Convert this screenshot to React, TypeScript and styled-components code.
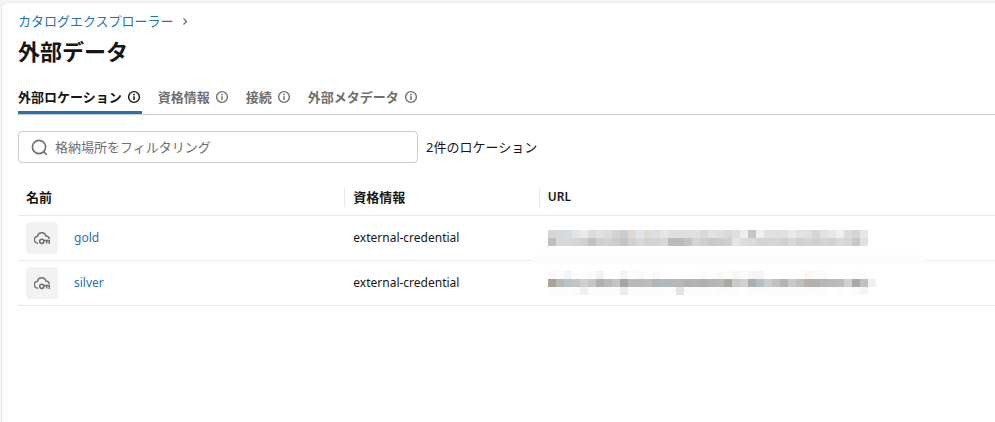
import React from "react";
import styled, { createGlobalStyle } from "styled-components";

const GlobalStyle = createGlobalStyle`
  *, *::before, *::after { box-sizing: border-box; }
  html, body, #root { height: 100%; }
  body {
    margin: 0;
    background: #f5f5f6;
    color: #161616;
    font-family: "Noto Sans", "Noto Sans CJK JP", sans-serif;
    font-size: 13px;
    line-height: 20px;
  }
`;

const Shell = styled.div`
  min-height: 100%;
  padding: 2px 0 0 1px;
  display: flex;
`;

const Panel = styled.main`
  flex: 1;
  min-width: 0;
  padding: 8px 0 0 16px;
  background: #fff;
  border: solid #e8e9f1;
  border-width: 1px 0 0 1px;
  border-top-left-radius: 8px;
`;

const Breadcrumb = styled.nav`
  display: flex;
  align-items: center;
  gap: 8px;
`;

const Link = styled.a`
  color: #2272b4;
  text-decoration: none;
  &:hover { text-decoration: underline; }
`;

const Title = styled.h1`
  margin: 6px 0 0;
  font-size: 22px;
  line-height: 28px;
  font-weight: 700;
`;

const Tabs = styled.div`
  display: flex;
  gap: 16px;
  margin-top: 17px;
  border-bottom: 1px solid #cbcbcb;
`;

const Tab = styled.button<{ $active?: boolean }>`
  display: flex;
  align-items: center;
  gap: 5px;
  height: 32px;
  padding: 0 1px 2px 0;
  border: 0;
  background: none;
  box-shadow: ${(p) => (p.$active ? "inset 0 -3px #2272b4" : "none")};
  color: ${(p) => (p.$active ? "#161616" : "#6f6f6f")};
  font: inherit;
  font-weight: 700;
  white-space: nowrap;
  cursor: pointer;
`;

const Toolbar = styled.div`
  display: flex;
  align-items: center;
  gap: 8px;
  margin-top: 16px;
`;

const SearchBox = styled.label`
  display: flex;
  align-items: center;
  gap: 7px;
  flex: 0 1 400px;
  height: 32px;
  padding: 0 12px;
  border: 1px solid #cbcbcb;
  border-radius: 4px;
  color: #6f6f6f;
  &:focus-within { border-color: #2272b4; }
`;

const SearchInput = styled.input`
  flex: 1;
  min-width: 0;
  padding: 0;
  border: 0;
  outline: 0;
  background: none;
  color: #161616;
  font: inherit;
  &::placeholder { color: #6f6f6f; opacity: 1; }
`;

const Table = styled.table`
  width: 100%;
  margin-top: 16px;
  table-layout: fixed;
  border-collapse: separate;
  border-spacing: 0;
  text-align: left;
`;

const HeadCell = styled.th<{ $width?: string }>`
  width: ${(p) => p.$width ?? "auto"};
  height: 37px;
  padding: 0;
  border-bottom: 1px solid #e8eaed;
  font-size: ${(p) => (p.lang === "en" ? 12 : 13)}px;
  font-weight: ${(p) => (p.lang === "en" ? 600 : 700)};
`;

const HeadLabel = styled.div<{ $divided?: boolean }>`
  padding-left: 8px;
  border-left: ${(p) => (p.$divided ? "1px solid #e8e8e8" : "0")};
`;

const Cell = styled.td`
  position: relative;
  height: 45px;
  padding: 0 0 0 9px;
  border-bottom: 1px solid #e6e9ef;
  font-size: 12px;
`;

const NameCell = styled.div`
  display: flex;
  align-items: center;
  gap: 16px;
  margin-left: -1px;
`;

const IconTile = styled.span`
  display: grid;
  place-items: center;
  width: 32px;
  height: 32px;
  border-radius: 4px;
  background: #f2f2f4;
  color: #6f6f6f;
`;

const Mosaic = styled.svg`
  display: block;
`;

const Veil = styled.span`
  position: absolute;
  left: -7px;
  bottom: -3px;
  z-index: 1;
  width: 394px;
  height: 8px;
  background: #fcfcfc;
`;

function InfoIcon() {
  return (
    <svg width="14" height="14" viewBox="0 0 14 14" fill="none" aria-hidden="true">
      <circle cx="7" cy="7" r="5.4" stroke="currentColor" strokeWidth="1.4" />
      <path d="M7 6.3V9.9" stroke="currentColor" strokeWidth="1.5" />
      <circle cx="7" cy="4.6" r="0.9" fill="currentColor" />
    </svg>
  );
}

function ChevronIcon() {
  return (
    <svg width="6" height="8" viewBox="0 0 6 8" fill="none" aria-hidden="true">
      <path d="M1.5 1.5 4.5 4.5 1.5 7.5" stroke="#6f6f6f" strokeWidth="1.3" />
    </svg>
  );
}

function SearchIcon() {
  return (
    <svg width="17" height="17" viewBox="0 0 17 17" fill="none" aria-hidden="true">
      <circle cx="8" cy="8" r="6.6" stroke="currentColor" strokeWidth="1.6" />
      <path d="M12.6 12.6 15.8 15.8" stroke="currentColor" strokeWidth="1.6" />
    </svg>
  );
}

function CloudKeyIcon() {
  return (
    <svg width="16" height="16" viewBox="0 0 16 16" fill="none" stroke="currentColor" strokeWidth="1.5" aria-hidden="true">
      <path d="M4 13.2A3.5 3.5 0 0 1 3.65 6.2 4.2 4.2 0 0 1 11.9 6.1C13.6 6.2 14.9 7.2 15.3 8.8" />
      <circle cx="7.8" cy="11.3" r="2.1" />
      <path d="M9.9 10.6H15.3V14.1M12.7 10.6V13.6" />
    </svg>
  );
}

const goldPixels = [
  "d9d5d3 d8d9d7 d5dce0 e2e4e8 ecebea dbdcdb dfe1e5 dcdbd9 d4d2cf cbcdd1 ded9d4 e1e5ea dedad5 dcdee2 e5e5e6 dfdfdf dfdfde e0e0df e0e0e0 d9dad6 e2e3e4 e1dfdb d9dad6 dce0e3 eeeeed c5c5c5 f0f0f0 e0e0e0 e0e0e0 dfe0e4 ebeae9 e2e4e3 e0e0df d5d6d3 e0e1e3 e9e7e4 eef0f3 dedcda d5d5d6 e3e8ec",
  "c5bfba d8d9d6 d2dadd d4d5d8 d0d0d2 c7c0b9 cdd1d6 cfd2d6 d0ccca c1c5ca d6cfcd d3dade d5d2cb d2d3d7 d8d7d5 babcbb babbbb c5c4c2 d3d5d8 d0cfcd c6c8cb cfccc8 cdcfd2 e2e4e6 dedddb d9dadc d4d4d4 d5d5d5 d4d6d4 d0d0ce dad8d5 d0d0d1 d5d4d5 cfcfcd d3d4d6 d0d2d5 d7d9dc d8d4d2 c7c7ca dde0e5",
];

const silverPixels = [
  "faf9f8 fdfdfd f2f5f8 ffffff fdfdfd fbfbfa f2f2f2 ffffff ffffff f4f4f4 fdfdfd f9f9f9 ffffff f9f9fa ffffff ffffff ffffff ffffff ffffff fafafa ffffff f9f9f9 fefefd f7f7f7 fbfbfb f6f5f4 f5f5f5 ffffff ffffff ffffff ffffff fefefd f9f8f7 fbfaf9 fafafa ffffff ffffff ffffff fbfbfb fcfcfc ffffff",
  "aca29c b9bab5 b8c3cb c3c4c7 d0d0ce c4c6c8 b0b1ae b9bab9 c3c4ca a5a5a4 b9b9b9 b9b9b9 bdbdbd b4b5b5 b2b8be b4b8bb bcb7b4 b4afac b1b3b6 acb0b4 b5b4b2 b8baba a8a8a7 ccc8c2 cdd2d2 aeaeaf b6bec5 cbcbcb bec1c3 b5b4b1 c8c9c9 bcc1bf b8aead b2b1b1 b7b8be bababb b9bdc1 d1d0ca a8a8ad c0bfbe eaf0f4",
  "fbfbfb fcfcfb fdfdfc fbfbfb eef0f1 fdfdfd fcfcfc fcfcfc fdfdfd edecea fdfdfd fbfcfd fdfdfd fcfcfc fdfdfd fdfdfd e3e3e3 fcfdfd fcfcfc fcfcfc fdfdfd fbfbfb fbfbfb fcfcfc fefefe fbfbfb fbfbfb fbfbfb fcfcfc fcfcfc fcfcfc fcfcfc fbfbfb fbfbfb fcfcfc fefefe fcfcfc fefefe fbfbfb f5f5f5 ffffff",
];

function MaskedUrl({ pixels }: { pixels: string[] }) {
  const rows = pixels.map((row) => row.split(" "));
  return (
    <Mosaic
      width={rows[0].length * 8}
      height={rows.length * 8}
      shapeRendering="crispEdges"
      role="img"
      aria-label="URL"
    >
      {rows.map((row, y) =>
        row.map((color, x) => (
          <rect key={`${x}-${y}`} x={x * 8} y={y * 8} width="8" height="8" fill={`#${color}`} />
        )),
      )}
    </Mosaic>
  );
}

const tabs = ["外部ロケーション", "資格情報", "接続", "外部メタデータ"];

const locations = [
  { name: "gold", credential: "external-credential", pixels: goldPixels, veiled: true },
  { name: "silver", credential: "external-credential", pixels: silverPixels, veiled: false },
];

export default function App() {
  return (
    <>
      <GlobalStyle />
      <Shell>
        <Panel lang="ja">
          <Breadcrumb>
            <Link href="#catalog">カタログエクスプローラー</Link>
            <ChevronIcon />
          </Breadcrumb>
          <Title>外部データ</Title>
          <Tabs role="tablist">
            {tabs.map((label, i) => (
              <Tab key={label} type="button" role="tab" aria-selected={i === 0} $active={i === 0}>
                {label}
                <InfoIcon />
              </Tab>
            ))}
          </Tabs>
          <Toolbar>
            <SearchBox>
              <SearchIcon />
              <SearchInput
                type="text"
                placeholder="格納場所をフィルタリング"
                aria-label="格納場所をフィルタリング"
              />
            </SearchBox>
            <span>2件のロケーション</span>
          </Toolbar>
          <Table>
            <thead>
              <tr>
                <HeadCell scope="col" $width="33.4%">
                  <HeadLabel>名前</HeadLabel>
                </HeadCell>
                <HeadCell scope="col" $width="19.9%">
                  <HeadLabel $divided>資格情報</HeadLabel>
                </HeadCell>
                <HeadCell scope="col" lang="en">
                  <HeadLabel $divided>URL</HeadLabel>
                </HeadCell>
              </tr>
            </thead>
            <tbody>
              {locations.map((location) => (
                <tr key={location.name}>
                  <Cell>
                    <NameCell>
                      <IconTile>
                        <CloudKeyIcon />
                      </IconTile>
                      <Link href={`#${location.name}`}>{location.name}</Link>
                    </NameCell>
                  </Cell>
                  <Cell>{location.credential}</Cell>
                  <Cell>
                    <MaskedUrl pixels={location.pixels} />
                    {location.veiled && <Veil />}
                  </Cell>
                </tr>
              ))}
            </tbody>
          </Table>
        </Panel>
      </Shell>
    </>
  );
}
